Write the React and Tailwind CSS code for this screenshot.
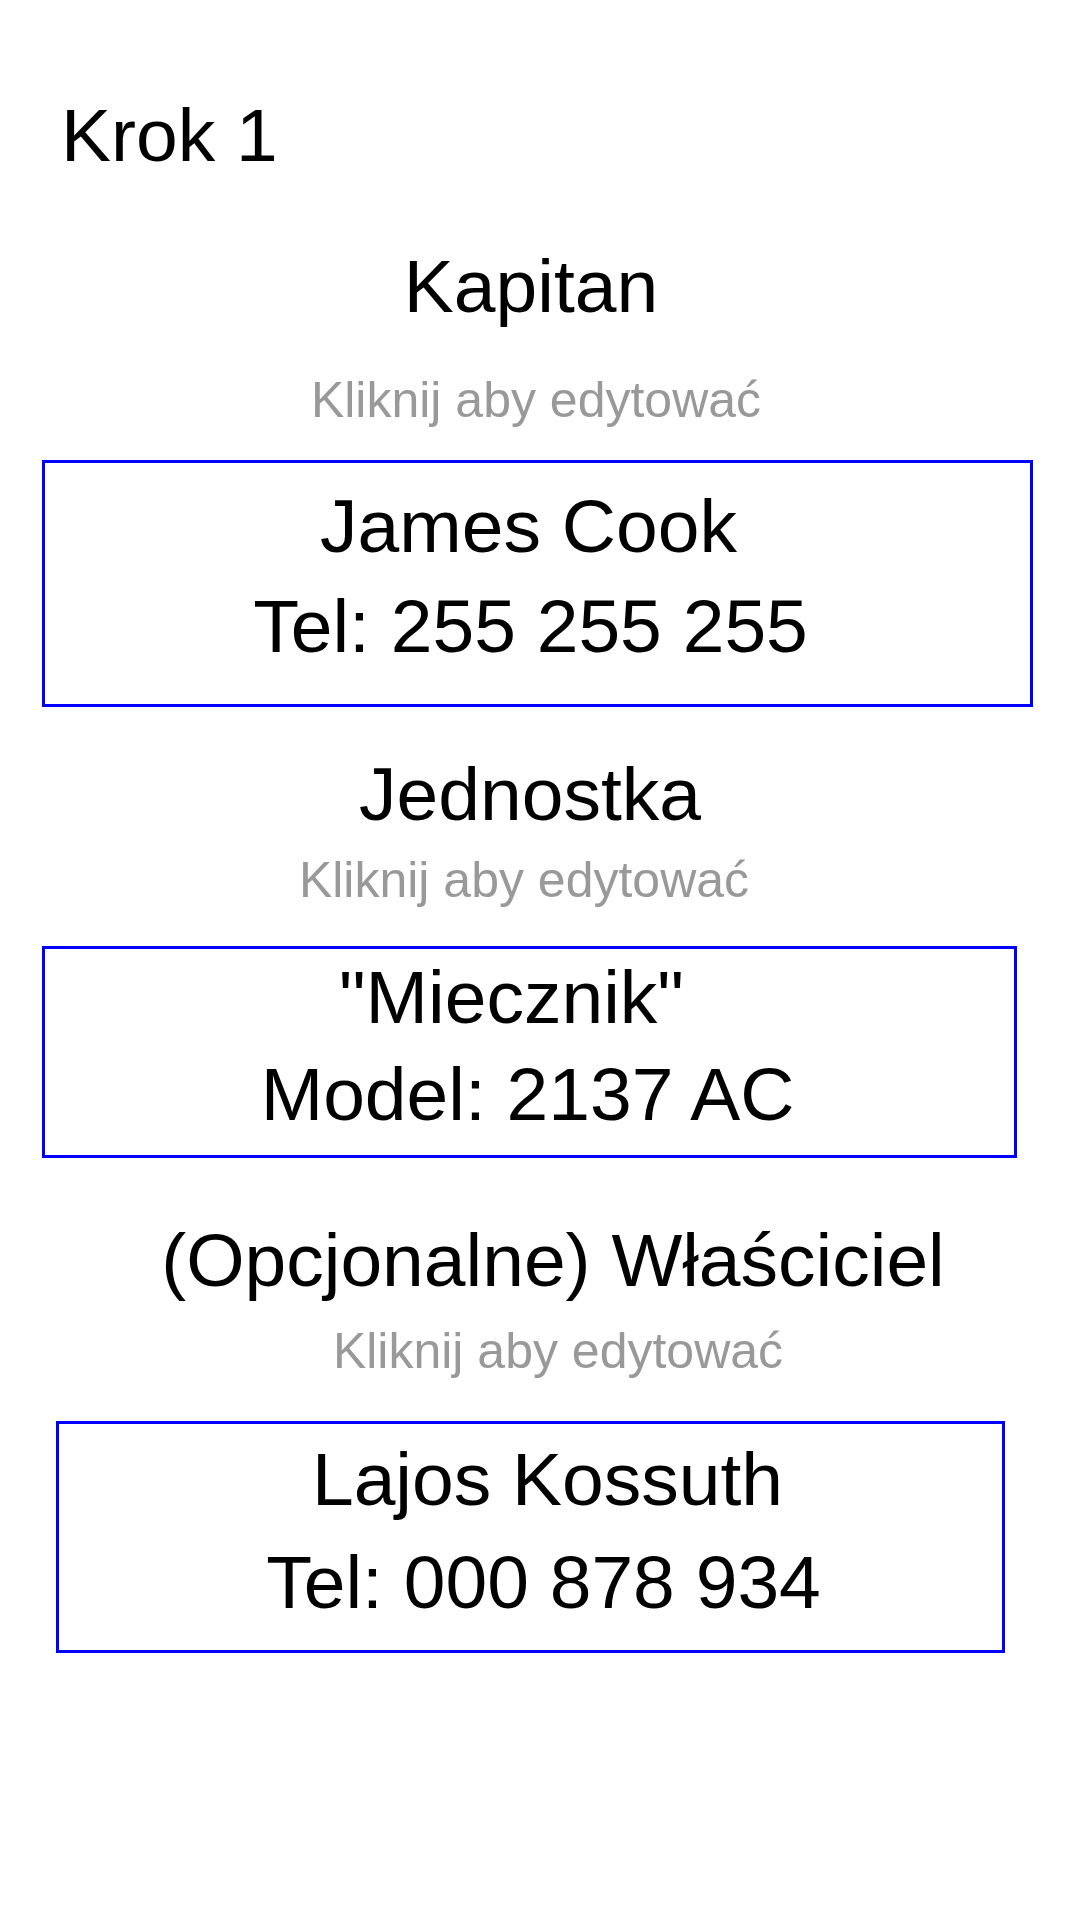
import React from "react";

const font = { fontFamily: '"Liberation Sans", Arial, sans-serif' };

const Heading = ({ children, className = "" }) => (
  <div className={`text-[75px] leading-[86px] text-black text-center whitespace-pre ${className}`}>
    {children}
  </div>
);

const Hint = ({ className = "" }) => (
  <div className={`text-[50px] leading-[58px] text-[#999999] text-center whitespace-pre ${className}`}>
    Kliknij aby edytować
  </div>
);

const App = () => {
  return (
    <div className="w-[1080px] h-[1920px] bg-white overflow-hidden" style={font}>
      {/* Step title */}
      <div className="pt-[92px] pl-[61px] text-[75px] leading-[86px] text-black">
        Krok 1
      </div>

      {/* Captain */}
      <Heading className="mt-[65px] pr-[18px]">Kapitan</Heading>
      <Hint className="mt-[42px] pr-[8px]" />
      <div className="mt-[31px] ml-[42px] w-[991px] h-[247px] border-[3px] border-[#0000ff] pt-[20px]">
        <Heading className="pr-[18px]">James Cook</Heading>
        <Heading className="mt-[14px] pr-[14px]">Tel: 255 255 255</Heading>
      </div>

      {/* Unit */}
      <Heading className="mt-[44px] pr-[20px]">Jednostka</Heading>
      <Hint className="mt-[14px] pr-[32px]" />
      <div className="mt-[37px] ml-[42px] w-[975px] h-[212px] border-[3px] border-[#0000ff] pt-[5px]">
        <Heading className="pr-[36px]">"Miecznik"</Heading>
        <Heading className="mt-[11px] pr-[4px]">Model: 2137 AC</Heading>
      </div>

      {/* Owner */}
      <Heading className="mt-[59px] pl-[26px]">(Opcjonalne) Właściciel</Heading>
      <Hint className="mt-[19px] pl-[36px]" />
      <div className="mt-[41px] ml-[56px] w-[949px] h-[232px] border-[3px] border-[#0000ff] pt-[12px]">
        <Heading className="pl-[34px]">Lajos Kossuth</Heading>
        <Heading className="mt-[17px] pl-[26px]">Tel: 000 878 934</Heading>
      </div>
    </div>
  );
};

export default App;
